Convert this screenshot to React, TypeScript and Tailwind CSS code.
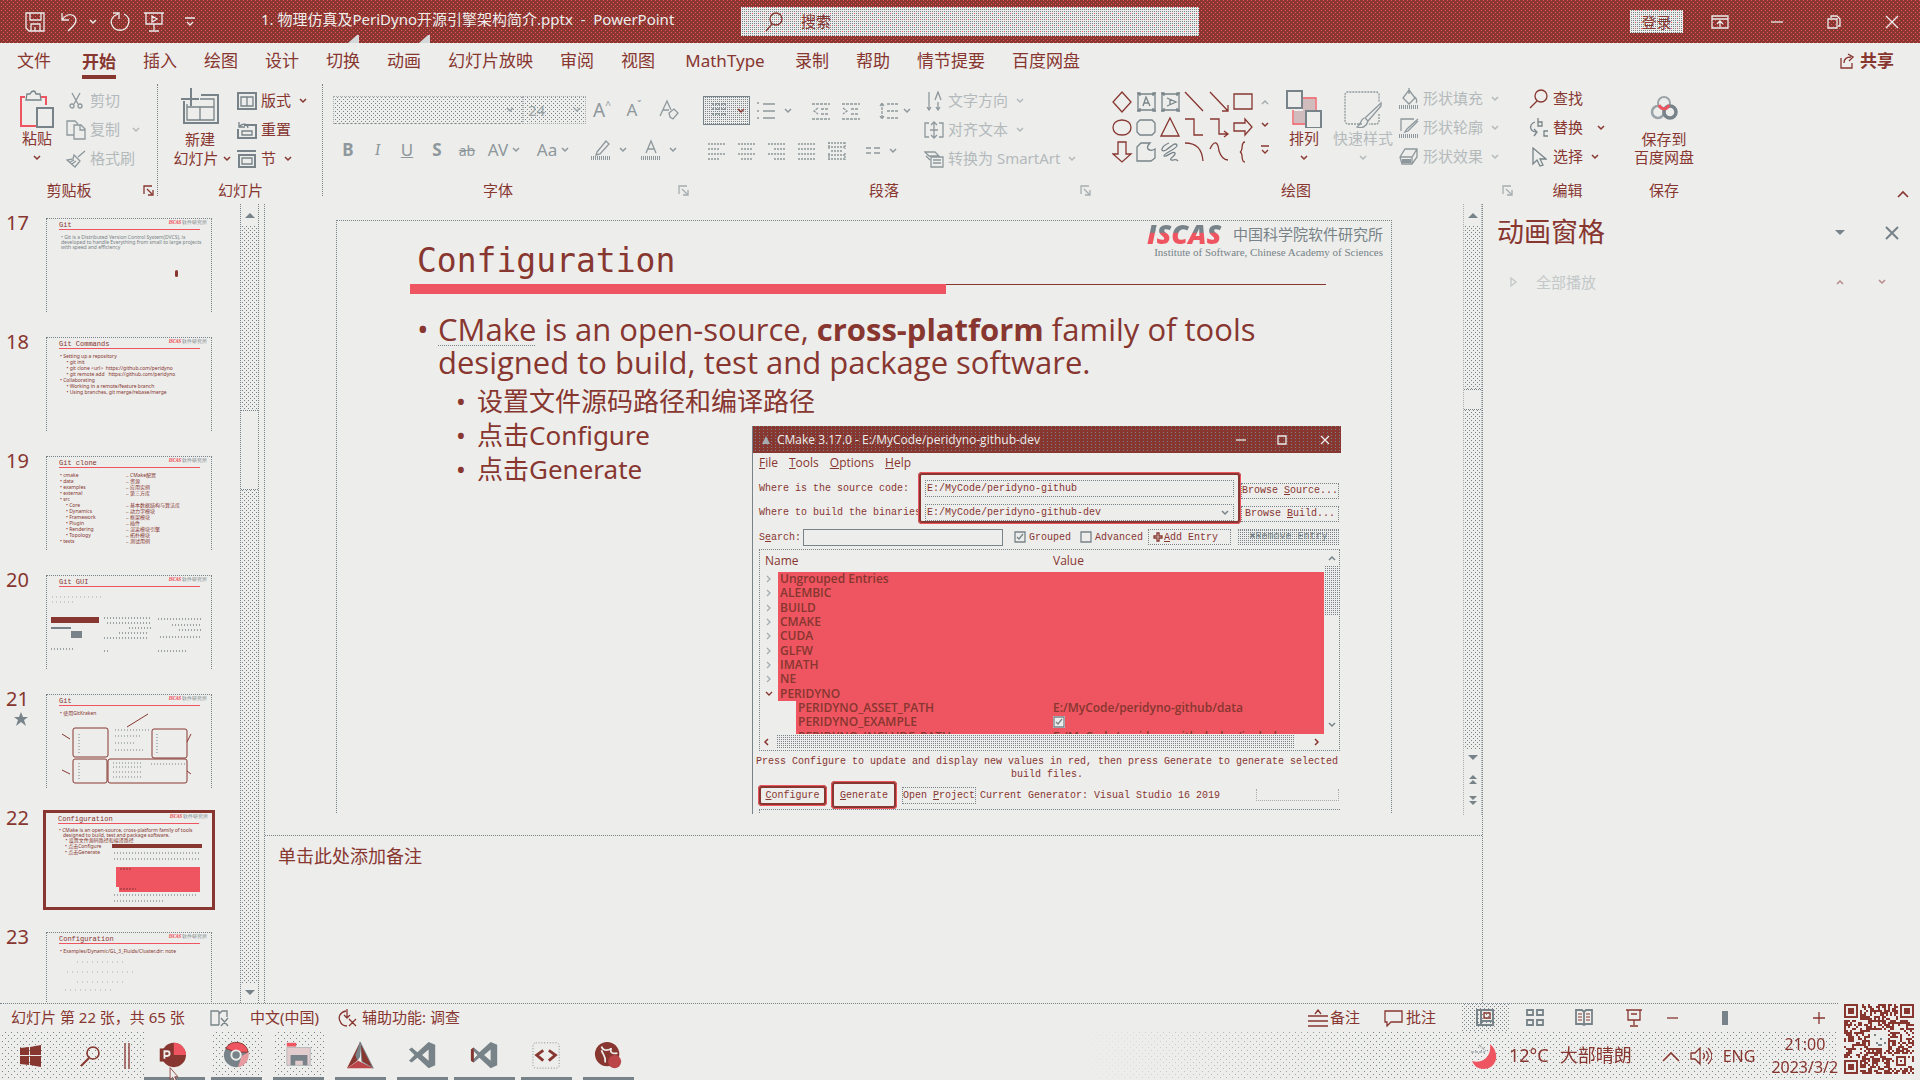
import React from "react";

type Kids = { children?: React.ReactNode; className?: string };

const RED_DITHER =
  "bg-[#873630] bg-[conic-gradient(at_3px_1px,#ee5560_25%,#0000_0),conic-gradient(at_3px_1px,#ee5560_25%,#0000_0)] bg-[length:4px_4px] bg-[position:0_0,2px_2px]";
const GRAY_DITHER =
  "bg-[conic-gradient(at_3px_1px,#778388_25%,#0000_0),conic-gradient(at_3px_1px,#778388_25%,#0000_0)] bg-[length:4px_4px] bg-[position:0_0,2px_2px]";
const DENSE_DITHER =
  "bg-[#ededeb] bg-[conic-gradient(at_1px_1px,#778388_25%,#0000_0)] bg-[length:2px_2px]";
const ROSE_DITHER =
  "bg-[#ededeb] bg-[conic-gradient(at_5px_1px,#ee5560_25%,#0000_0),conic-gradient(at_1px_1px,#778388_25%,#0000_0)] bg-[length:6px_6px,2px_2px]";
const SPARSE_DITHER =
  "bg-[conic-gradient(at_5px_1px,#778388_25%,#0000_0),conic-gradient(at_5px_1px,#778388_25%,#0000_0)] bg-[length:6px_6px] bg-[position:0_0,3px_3px]";

function Ico({ w, h, children, className = "" }: Kids & { w: number; h: number }) {
  return (
    <svg width={w} height={h} viewBox={`0 0 ${w} ${h}`} fill="none" stroke="currentColor" strokeWidth="1.3" className={`shrink-0 ${className}`} aria-hidden="true">
      {children}
    </svg>
  );
}

function Chev({ className = "" }: { className?: string }) {
  return (
    <Ico w={8} h={6} className={className}>
      <path d="M1 1l3 3 3-3" strokeWidth="1.5" />
    </Ico>
  );
}

function Launcher({ dim = false }: { dim?: boolean }) {
  return (
    <button aria-label="更多选项" className={`flex w-5 items-center justify-center ${dim ? "text-[#a5adb0]" : "text-[#873630]"}`}>
      <Ico w={11} h={11}>
        <path d="M1 9V1h8M4 4l5 5M10 5v5H5" />
      </Ico>
    </button>
  );
}

function Group({ label, launcher, className = "", children }: Kids & { label: string; launcher?: "on" | "dim" }) {
  return (
    <section aria-label={label} className={`flex shrink-0 flex-col ${className}`}>
      <div className="flex h-24">{children}</div>
      <div className="flex h-5 leading-5">
        <span className="flex-1 text-center">{label}</span>
        {launcher && <Launcher dim={launcher === "dim"} />}
      </div>
    </section>
  );
}

function Row({ icon, text, chev, dim, className = "" }: { icon: React.ReactNode; text: string; chev?: boolean; dim?: boolean; className?: string }) {
  return (
    <button disabled={dim} className={`flex h-[29px] items-center gap-1 whitespace-nowrap ${dim ? "text-[#b4babc]" : ""} ${className}`}>
      <span className={`flex w-5 justify-center ${dim ? "text-[#8e989c]" : "text-[#778388]"}`}>{icon}</span>
      <span>{text}</span>
      {chev && <Chev className="ml-1" />}
    </button>
  );
}

function Tool({ label, className = "", children }: Kids & { label: string }) {
  return (
    <button aria-label={label} className={`flex h-7 items-center justify-center text-[#8e989c] ${className}`}>
      {children}
    </button>
  );
}

function Lines({ xs }: { xs: [number, number][] }) {
  return (
    <Ico w={20} h={18}>
      {xs.map(([a, b], i) => (
        <path key={i} d={`M${a} ${2 + i * 5}H${b}`} strokeDasharray="2 1" />
      ))}
    </Ico>
  );
}

const tabs = ["插入", "绘图", "设计", "切换", "动画", "幻灯片放映", "审阅", "视图", "MathType", "录制", "帮助", "情节提要", "百度网盘"];

function TitleBar() {
  return (
    <header className={`relative flex h-[43px] shrink-0 items-center text-[#ededeb] ${RED_DITHER}`}>
      <div className="flex w-[261px] items-center pl-[24px]">
        <button aria-label="保存">
          <Ico w={22} h={22}>
            <path d="M2 2h18v18H5l-3-3zM6 2v7h11V2M7 20v-7h9v7M11 16v4" />
          </Ico>
        </button>
        <button aria-label="撤消" className="ml-[13px] flex items-center gap-2">
          <Ico w={22} h={22}>
            <path d="M3 2v7h7M3 9c3-5 8-7 12-4 4 4 2 8-6 15" />
          </Ico>
          <Chev />
        </button>
        <button aria-label="恢复" className="ml-3">
          <Ico w={22} h={22}>
            <path d="M4 2h6v6M9 3C3 5 1 10 3 14c3 7 13 7 16 0 2-5 0-9-4-11" />
          </Ico>
        </button>
        <button aria-label="从头开始放映" className="ml-3">
          <Ico w={22} h={22}>
            <path d="M1 2h20M3 2v11h16V2M11 13v6M6 20h10M9 5l5 3-5 3z" />
          </Ico>
        </button>
        <button aria-label="自定义快速访问工具栏" className="ml-5">
          <Ico w={10} h={10}>
            <path d="M0 1h10M2 5l3 3 3-3" />
          </Ico>
        </button>
      </div>
      <h1 className="w-[480px] pb-[5px] text-[15px] whitespace-pre">1. 物理仿真及PeriDyno开源引擎架构简介.pptx&nbsp; -&nbsp; PowerPoint</h1>
      <label className={`flex h-[29px] w-[458px] items-center gap-[18px] pl-6 text-[#873630] ${ROSE_DITHER}`}>
        <Ico w={18} h={20}>
          <circle cx="11" cy="7" r="6" />
          <path d="M7 12l-6 7" />
        </Ico>
        <input aria-label="搜索" placeholder="搜索" className="min-w-0 flex-1 bg-transparent text-[15px] outline-none placeholder:text-[#873630]" />
      </label>
      <div className="ml-auto flex items-center pr-[21px]">
        <button className={`h-[23px] w-[53px] text-[15px] leading-[22px] text-[#873630] ${ROSE_DITHER}`}>登录</button>
        <button aria-label="功能区显示选项" className="ml-[28px]">
          <Ico w={18} h={14}>
            <path d="M1 1h16v12H1zM1 4h16M9 12V6M6 9l3-3 3 3" />
          </Ico>
        </button>
        <button aria-label="最小化" className="ml-[41px]">
          <Ico w={14} h={14}>
            <path d="M1 7h12" />
          </Ico>
        </button>
        <button aria-label="还原" className="ml-[43px]">
          <Ico w={14} h={14}>
            <path d="M1 4h9v9H1zM4 3V1h6l3 3v7h-2" />
          </Ico>
        </button>
        <button aria-label="关闭" className="ml-[44px]">
          <Ico w={14} h={14}>
            <path d="M1 1l12 12M13 1L1 13" />
          </Ico>
        </button>
      </div>
      <Ico w={11} h={8} className="absolute bottom-0 left-[348px]">
        <path d="M0 8l9-8h2v8z" fill="#d5d8d8" stroke="none" />
      </Ico>
      <Ico w={11} h={8} className="absolute bottom-0 left-[419px]">
        <path d="M0 8l9-8h2v8z" fill="#d5d8d8" stroke="none" />
      </Ico>
    </header>
  );
}

function Tabs() {
  return (
    <nav className="flex h-[41px] shrink-0 items-start pt-[6px] text-[17px] leading-6">
      <button className="ml-[17px] h-6">文件</button>
      <button className="ml-[31px] h-[30px] border-b-4 border-[#873630] font-bold">开始</button>
      <div className="ml-[27px] flex gap-[27px]">
        {tabs.map((t) => (
          <button key={t} className={`h-6 whitespace-nowrap ${t === "MathType" ? "w-[86px]" : ""}`}>
            {t}
          </button>
        ))}
      </div>
      <button className="mr-[26px] ml-auto flex items-center gap-[6px] font-bold">
        <Ico w={14} h={16}>
          <path d="M1 5v10h11v-5M4 10c0-4 3-6 7-6M8 1l5 3-4 4" />
        </Ico>
        共享
      </button>
    </nav>
  );
}

const shapes = [
  "M10 1l9 10-9 10-9-10z",
  "M2 3h17v16H2zM7 15l3-9 4 9M8 12h5M1 2h3v3M20 2h-3v3M1 20h3v-3M20 20h-3v-3",
  "M2 3h17v16H2zM7 7l9 4-9 4M10 8v5M1 2h3v3M20 2h-3v3M1 20h3v-3M20 20h-3v-3",
  "M1 1l18 19",
  "M1 1l18 19M19 14v6h-6",
  "M1 3h18v15H1z",
  "M10 4c12 0 12 15 0 15S-2 4 10 4z",
  "M4 4h12l3 3v9l-3 3H4l-3-3V7z",
  "M10 2l9 18H1z",
  "M1 3h9v16h9",
  "M1 3h9v15h8M15 15l4 3-4 3",
  "M1 7h11V3l7 8-7 8v-4H1z",
  "M6 1h8v12h5l-9 8-9-8h5z",
  "M1 6l4-4h9c-6 6 0 9 5 6v9l-4 3H1z",
  "M9 2C0 6 0 12 6 9c6-4 9-8 11-5 1 4-14 8-13 11 2 2 9-6 11-3 1 3-6 5-4 7 3 1 4-2 7 1",
  "M1 2c12 0 17 6 18 18",
  "M1 8c4-9 8-8 9 2 2 6 5 9 9 9",
  "M12 1c-5 0-1 9-5 10 4 1 0 10 5 10",
];
const grayShapes = [1, 2, 7, 13, 14];

const cloudCircles = (
  <Ico w={28} h={24}>
    <circle cx="8" cy="16" r="6" strokeWidth="2.5" stroke="#9aa3a7" />
    <circle cx="14" cy="7" r="6" strokeWidth="2" stroke="#9aa3a7" />
    <circle cx="20" cy="16" r="6" strokeWidth="3.5" stroke="#778388" />
    <path d="M9 9c2 5 8 5 10 0" strokeWidth="3" stroke="#ee5560" />
  </Ico>
);

function Ribbon() {
  return (
    <div className="flex h-[120px] shrink-0 text-[15px]">
      <Group label="剪贴板" launcher="on" className="w-[158px]">
        <button className="flex w-[56px] flex-col items-center pt-[6px] pl-[18px] leading-5">
          <Ico w={36} h={38} className="text-[#778388]">
            <path d="M6 7H2v29h15M22 7h5v8" stroke="#ee5560" strokeWidth="2" />
            <path d="M8 4h3c2-4 5-4 6 0h4l1 6H7z" />
            <rect x="18" y="18" width="16" height="19" strokeWidth="2" />
          </Ico>
          <span>粘贴</span>
          <Chev className="mt-[7px]" />
        </button>
        <div className="pt-[2px] pl-[10px]">
          <Row dim text="剪切" icon={<Ico w={14} h={18}><path d="M3 1l6 11M11 1L5 12" /><circle cx="3" cy="14" r="2" /><circle cx="11" cy="14" r="2" /></Ico>} />
          <div className="flex items-center">
            <Row dim text="复制" icon={<Ico w={20} h={20}><path d="M8 15H1V1h8l3 3M8 5h7l4 4v10H8zM14 5v5h5" /></Ico>} />
            <Chev className="ml-3 text-[#b4babc]" />
          </div>
          <Row dim text="格式刷" icon={<Ico w={20} h={18}><path d="M19 1l-7 6M8 5l6 6-5 6-8-7 6-1zM4 12l4-2M6 14l4-3" /></Ico>} />
        </div>
      </Group>
      <div className="-ml-px h-[112px] w-px self-start border-l border-dotted border-[#778388]" />
      <Group label="幻灯片" className="w-[165px]">
        <button className="flex w-[76px] flex-col items-center pt-[3px] pl-2 leading-[19px]">
          <Ico w={40} h={38} className="text-[#778388]">
            <path d="M4 14v22h34V8H21M1 12h18M11 1v18" strokeWidth="2" />
            <path d="M7 17v16h27V12H20M7 20h27M20 20v13" />
          </Ico>
          <span className="mt-[5px]">新建</span>
          <span className="flex items-center gap-1 pl-1 whitespace-nowrap">
            幻灯片 <Chev />
          </span>
        </button>
        <div className="pt-[2px] pl-[3px]">
          <Row text="版式" chev icon={<Ico w={20} h={18}><path d="M1 1h18v16H1z" strokeWidth="2" /><path d="M4 5h12v9H4zM10 5v9" /></Ico>} />
          <Row text="重置" icon={<Ico w={20} h={18}><path d="M7 4h12v13H1V8" strokeWidth="2" /><path d="M2 1v5h6M2 6c3-4 8-4 9 1M5 10h10v4H5z" /></Ico>} />
          <Row text="节" chev icon={<Ico w={20} h={20}><path d="M0 2h19M2 6h16v12H2z" strokeWidth="2" /><path d="M5 9h10v6H5z" /></Ico>} />
        </div>
      </Group>
      <div className="-ml-px h-[112px] w-px self-start border-l border-dotted border-[#778388]" />
      <Group label="字体" launcher="dim" className="w-[370px]">
        <div className="flex flex-col gap-3 pt-[12px] pl-[10px]">
          <div className="flex items-center">
            <button aria-label="字体" className={`flex h-[28px] w-[190px] items-center justify-end border border-dotted border-[#a5adb0] pr-2 text-[#9aa3a7] ${GRAY_DITHER}`}>
              <Chev />
            </button>
            <button aria-label="字号" className={`flex h-[28px] w-[63px] items-center justify-between border border-dotted border-[#a5adb0] px-1 text-[#9aa3a7] ${GRAY_DITHER}`}>
              24 <Chev />
            </button>
            <Tool label="增大字号" className="ml-[6px] w-[20px] text-[19px]">
              A<sup className="text-[10px]">^</sup>
            </Tool>
            <Tool label="减小字号" className="ml-[12px] w-[20px] text-[17px]">
              A<sup className="text-[10px]">ˇ</sup>
            </Tool>
            <Tool label="清除格式" className="ml-[15px]">
              <Ico w={20} h={22}>
                <path d="M1 17L8 2l4 9M4 11h6M10 14l5-4 4 4-5 6-3-2z" />
              </Ico>
            </Tool>
          </div>
          <div className="flex items-center text-[17px]">
            <Tool label="加粗" className="w-[30px] font-bold">B</Tool>
            <Tool label="倾斜" className="w-[29px] font-serif italic">I</Tool>
            <Tool label="下划线" className="w-[30px] underline">U</Tool>
            <Tool label="阴影" className="w-[30px] font-bold">S</Tool>
            <Tool label="删除线" className="w-[30px] text-[14px] line-through">ab</Tool>
            <Tool label="字符间距" className="w-[44px] gap-1">AV <Chev /></Tool>
            <Tool label="更改大小写" className="ml-[5px] w-[44px] gap-1">Aa <Chev /></Tool>
            <Tool label="突出显示" className="ml-[12px] w-[44px] gap-2">
              <Ico w={20} h={22}>
                <path d="M6 13L15 2l3 3-9 10-4 1z" />
                <path d="M0 19h20" strokeWidth="4" strokeDasharray="1 1" />
              </Ico>
              <Chev />
            </Tool>
            <Tool label="字体颜色" className="ml-[6px] w-[44px] gap-2">
              <Ico w={20} h={22}>
                <path d="M5 14l5-12 5 12M7 10h6" />
                <path d="M0 19h20" strokeWidth="4" strokeDasharray="1 1" />
              </Ico>
              <Chev />
            </Tool>
          </div>
        </div>
      </Group>
      <Group label="段落" launcher="dim" className="w-[402px]">
        <div className="flex w-[228px] flex-col gap-3 pt-[12px] pl-[10px]">
          <div className="flex items-center">
            <button aria-label="项目符号" className={`flex h-[29px] w-[47px] items-center justify-center gap-2 border border-[#778388] text-[#778388] ${DENSE_DITHER}`}>
              <Lines xs={[[3, 17], [3, 17], [3, 17]]} />
              <Chev className="text-[#873630]" />
            </button>
            <Tool label="编号" className="ml-[6px] gap-2">
              <Ico w={20} h={20}><path d="M7 3h12M7 10h12M7 17h12M1 2h2M1 10h2M1 17h2" /></Ico>
              <Chev />
            </Tool>
            <Tool label="减少缩进" className="ml-[20px]"><Ico w={18} h={18}><path d="M0 2h18M9 7h8M9 12h8M0 17h18M6 6L2 9l4 3" strokeDasharray="3 1" /></Ico></Tool>
            <Tool label="增加缩进" className="ml-[12px]"><Ico w={18} h={18}><path d="M0 2h18M9 7h8M9 12h8M0 17h18M1 6l4 3-4 3" strokeDasharray="3 1" /></Ico></Tool>
            <Tool label="行距" className="ml-[19px] gap-1"><Ico w={20} h={20}><path d="M8 3h12M8 10h12M8 17h12M3 2v16M1 5l2-3 2 3M1 15l2 3 2-3" strokeDasharray="3 1" /></Ico><Chev /></Tool>
          </div>
          <div className="flex items-center gap-[10px] pl-1">
            <Tool label="左对齐"><Lines xs={[[1, 19], [1, 13], [1, 19], [1, 13]]} /></Tool>
            <Tool label="居中"><Lines xs={[[1, 19], [4, 16], [1, 19], [4, 16]]} /></Tool>
            <Tool label="右对齐"><Lines xs={[[1, 19], [7, 19], [1, 19], [7, 19]]} /></Tool>
            <Tool label="两端对齐"><Lines xs={[[1, 19], [1, 19], [1, 19], [1, 19]]} /></Tool>
            <Tool label="分散对齐"><Ico w={20} h={20}><path d="M1 2h18M1 6h18M1 14h18M1 18h18M2 1v7M18 1v7M2 12v7M18 12v7M4 10h12" strokeDasharray="2 1" /></Ico></Tool>
            <Tool label="分栏" className="ml-2 gap-2"><Ico w={16} h={12}><path d="M1 3h5M1 8h5M9 3h6M9 8h6" /></Ico><Chev /></Tool>
          </div>
        </div>
        <div className="pt-[2px] pl-[3px]">
          <Row dim chev text="文字方向" icon={<Ico w={16} h={20}><path d="M3 1v17M1 16l2 3 2-3M9 9l3-8 3 8M12 11v8M10 16l2 3 2-3" /></Ico>} />
          <Row dim chev text="对齐文本" icon={<Ico w={20} h={18}><path d="M5 2H1v14h4M15 2h4v14h-4M10 1v16M7 4l3-3 3 3M7 14l3 3 3-3M6 9h8" /></Ico>} />
          <Row dim chev text="转换为 SmartArt" icon={<Ico w={20} h={18}><path d="M1 2h10l4 4H5zM7 7h12v10H7zM9 10h8M9 13h8M2 6l4 4" /></Ico>} />
        </div>
      </Group>
      <Group label="绘图" launcher="dim" className="w-[422px]">
        <div className="flex pt-[6px] pl-[17px]">
          <div className="grid h-[74px] w-[145px] grid-cols-6">
            {shapes.map((d, i) => (
              <button key={i} aria-label={`形状 ${i + 1}`} className={grayShapes.includes(i) ? "text-[#778388]" : "text-[#873630]"}>
                <Ico w={21} h={22}>
                  <path d={d} />
                </Ico>
              </button>
            ))}
          </div>
          <div className="flex h-[74px] w-4 flex-col items-center justify-around">
            <Chev className="rotate-180 text-[#a5adb0]" />
            <Chev />
            <Ico w={8} h={10}><path d="M0 1h8M1 5l3 3 3-3" /></Ico>
          </div>
        </div>
        <button className="flex w-[60px] flex-col items-center pt-[6px] pl-[2px] leading-5">
          <Ico w={38} h={38} className="text-[#778388]">
            <path d="M18 8h13v12M8 20v14h12" stroke="#ee5560" />
            <path d="M18 9h12v11h-9v13H9V21h9z" fill="#d0bcbd" stroke="none" />
            <rect x="2" y="1" width="15" height="17" strokeWidth="2" />
            <rect x="21" y="21" width="15" height="17" strokeWidth="2" />
          </Ico>
          <span>排列</span>
          <Chev className="mt-[7px]" />
        </button>
        <button disabled className="flex w-[60px] flex-col items-center pt-[6px] leading-5 text-[#b4babc]">
          <Ico w={40} h={38} className="text-[#8e989c]">
            <path d="M19 34H4l-2-2V4l2-2h30l2 2v8M36 24v8l-2 2h-8" strokeDasharray="2 1" />
            <path d="M38 13L22 28l3 3 13-15zM21 28c-4 2-3 7-7 9 5 2 10-1 11-6" />
          </Ico>
          <span className="whitespace-nowrap">快速样式</span>
          <Chev className="mt-[7px]" />
        </button>
        <div className="pl-[6px]">
          <Row dim chev text="形状填充" icon={<Ico w={20} h={22}><path d="M10 2l6 8-6 6-6-6zM10 0v6M16 9c2 2 2 5 1 6" /><path d="M0 19h20" strokeWidth="4" strokeDasharray="1 1" /></Ico>} />
          <Row dim chev text="形状轮廓" icon={<Ico w={20} h={22}><path d="M2 14V2h13M19 2L8 12l-2 3 3-1L19 4" /><path d="M0 19h20" strokeWidth="4" strokeDasharray="1 1" /></Ico>} />
          <Row dim chev text="形状效果" icon={<Ico w={20} h={18}><path d="M1 9l5-8h12v8l-5 7H3zM1 9h12l5-8M13 9v7" /><path d="M3 13h9" strokeWidth="4" /></Ico>} />
        </div>
      </Group>
      <Group label="编辑" className="w-[101px]">
        <div className="pl-[12px]">
          <Row text="查找" icon={<Ico w={20} h={20} className="text-[#873630]"><circle cx="12" cy="7" r="6" /><path d="M8 12l-7 7" /></Ico>} />
          <div className="flex items-center">
            <Row text="替换" icon={<Ico w={20} h={22}><path d="M9 1v8h4V5H9M19 14h-4v5h4M6 5C-1 8 1 15 8 15M5 12l3 3-3 4" /></Ico>} />
            <Chev className="ml-[14px]" />
          </div>
          <Row text="选择" chev icon={<Ico w={16} h={20}><path d="M2 1v16l4-4 3 6 3-1-3-6h6z" /></Ico>} />
        </div>
      </Group>
      <Group label="保存" className="w-[92px]">
        <button className="flex flex-1 flex-col items-center pt-[12px] leading-[18px]">
          {cloudCircles}
          <span className="mt-[10px]">保存到</span>
          <span>百度网盘</span>
        </button>
      </Group>
      <button aria-label="折叠功能区" className="mr-[11px] mb-[6px] ml-auto self-end">
        <Ico w={12} h={8}><path d="M1 7l5-5 5 5" strokeWidth="1.6" /></Ico>
      </button>
    </div>
  );
}

function MiniList({ items, className = "" }: { items: string[]; className?: string }) {
  return (
    <ul className={`text-[5px] whitespace-pre ${className}`}>
      {items.map((t, i) => (
        <li key={i}>{t}</li>
      ))}
    </ul>
  );
}

function Thumb({ n, title, selected, star, children }: Kids & { n: number; title: string; selected?: boolean; star?: boolean }) {
  return (
    <li className="flex h-[119px]">
      <div className="-mt-[3px] w-[43px] pl-[6px] text-[20px] leading-[22px]">
        <span className="block">{n}</span>
        {star && (
          <Ico w={14} h={14} className="mt-[2px] ml-[8px]">
            <path d="M7 0l2 5h5l-4 3 2 6-5-4-5 4 2-6-4-3h5z" fill="#778388" stroke="none" />
          </Ico>
        )}
      </div>
      <button aria-label={`幻灯片 ${n}`} className={`block h-[100px] w-[172px] overflow-hidden border-[3px] text-left ${selected ? "border-[#873630]" : "border-transparent"}`}>
        <span className={`block h-[94px] ${selected ? "" : "border border-b-0 border-dotted border-[#778388]"}`}>
          <span className="flex h-[10px] justify-between pl-[12px] font-mono text-[7px] leading-[12px]">
            {title}
            <span className="flex gap-px pr-1 font-serif text-[5px] leading-[7px] text-[#778388]">
              <b className="text-[#ee5560] italic">ISCAS</b>软件研究所
            </span>
          </span>
          <span className="ml-[12px] block h-px w-[141px] bg-[#ee5560]" />
          {children}
        </span>
      </button>
    </li>
  );
}

const scopeRows: [string, string, number][] = [
  ["• cmake", "CMake配置", 0],
  ["• data", "资源", 0],
  ["• examples", "应用实例", 0],
  ["• external", "第三方库", 0],
  ["• src", "", 0],
  ["• Core", "基本数据结构与算法库", 6],
  ["• Dynamics", "动力学模块", 6],
  ["• Framework", "框架模块", 6],
  ["• Plugin", "插件", 6],
  ["• Rendering", "渲染模块引擎", 6],
  ["• Topology", "拓扑模块", 6],
  ["• tests", "测试用例", 0],
];

function ThumbPane() {
  return (
    <aside className="flex w-[265px] shrink-0 overflow-hidden border-r border-dotted border-[#778388]">
      <ol className="w-[240px] pt-[11px]">
        <Thumb n={17} title="Git">
          <MiniList className="pt-[5px] pl-[14px] leading-[5px] text-[#778388]" items={["• Git is a Distributed Version Control System(DVCS), is", "developed to handle Everything from small to large projects", "with speed and efficiency"]} />
          <span className="mt-[20px] ml-[128px] block h-[7px] w-[3px] rounded bg-[#873630]" />
        </Thumb>
        <Thumb n={18} title="Git Commands">
          <MiniList className="pt-[4px] pl-[13px] leading-[6px]" items={["• Setting up a repository", "     • git init", "     • git clone <url>  https://github.com/peridyno", "     • git remote add   https://github.com/peridyno", "• Collaborating", "     • Working in a remote/feature branch", "     • Using branches, git merge/rebase/merge"]} />
        </Thumb>
        <Thumb n={19} title="Git clone">
          <span className="grid grid-cols-[62px_1fr] gap-x-1 pt-[4px] pl-[13px] text-[5px] leading-[6px] whitespace-nowrap">
            {scopeRows.map(([a, b, pad]) => (
              <React.Fragment key={a}>
                <span style={{ paddingLeft: pad }}>{a}</span>
                <span>{b && `.. ${b}`}</span>
              </React.Fragment>
            ))}
          </span>
        </Thumb>
        <Thumb n={20} title="Git GUI">
          <svg width="164" height="72" viewBox="0 0 164 72" className="block" aria-hidden="true">
            <path d="M5 10h50M5 15h24" stroke="#a5adb0" strokeDasharray="1 3" />
            <rect x="4" y="30" width="48" height="6" fill="#873630" />
            <path d="M4 41h20" stroke="#778388" strokeWidth="2" />
            <rect x="24" y="44" width="11" height="7" fill="#778388" />
            <path d="M57 31h48M60 36h45M82 41h22M72 46h30M57 51h44M57 64h6M111 32h44M125 38h29M132 43h22M113 50h42M4 62h22M111 64h28" stroke="#778388" strokeWidth="2" strokeDasharray="1 2" opacity=".7" />
          </svg>
        </Thumb>
        <Thumb n={21} title="Git" star>
          <span className="block pt-[4px] pl-[13px] text-[5px] leading-[6px]">• 使用GitKraken</span>
          <svg width="164" height="76" viewBox="0 0 164 76" className="-mt-1 block" fill="none" stroke="#873630" aria-hidden="true">
            <rect x="26" y="16" width="35" height="29" rx="2" />
            <rect x="105" y="17" width="35" height="29" rx="2" />
            <rect x="26" y="47" width="34" height="24" rx="2" />
            <rect x="61" y="47" width="79" height="24" rx="2" />
            <path d="M101 2L80 15M15 22l8 5M144 22l-4 8M15 58l8 4M140 59l4 3" />
            <path d="M68 18h34M68 24h25M68 31h20M68 38h28M32 22v20M110 22v20M32 51v16M66 51h30M66 55h30M66 60h30M66 65h30M104 52h34" stroke="#778388" strokeDasharray="1 2" />
          </svg>
        </Thumb>
        <Thumb n={22} title="Configuration" selected>
          <MiniList className="pt-[4px] pl-[13px] leading-[5px]" items={["• CMake is an open-source, cross-platform family of tools", "   designed to build, test and package software.", "     • 设置文件源码路径和编译路径"]} />
          <span className="flex text-[5px] leading-[6px]">
            <span className="w-[66px] pl-[19px]">• 点击Configure<br />• 点击Generate</span>
            <svg width="92" height="60" viewBox="0 0 92 60" aria-hidden="true">
              <path d="M0 3h90" stroke="#873630" strokeWidth="4" />
              <path d="M2 10h86M2 16h86M2 52h84M2 58h50" stroke="#a5adb0" strokeWidth="2" strokeDasharray="1 2" />
              <path d="M4 24h84v25H7v-5H4z" fill="#ee5560" />
              <path d="M8 26h12M8 46h16" stroke="#873630" strokeDasharray="2 1" />
            </svg>
          </span>
        </Thumb>
        <Thumb n={23} title="Configuration">
          <MiniList className="pt-[4px] pl-[13px] leading-[6px]" items={["• Examples/Dynamic/GL_3_Fluids/Cluster.dir: note"]} />
          <svg width="150" height="50" viewBox="0 0 150 50" className="block" aria-hidden="true">
            <path d="M30 8h50M20 18h70M30 28h50M18 36h50" stroke="#a5adb0" strokeDasharray="1 4" />
          </svg>
        </Thumb>
      </ol>
      <div className={`flex h-full w-[19px] flex-col border-x border-dotted border-[#778388] ${GRAY_DITHER}`}>
        <button aria-label="向上滚动" className="flex h-[21px] items-center justify-center bg-[#ededeb]"><Tri up /></button>
        <div className="mt-[185px] h-[80px] border-y border-dotted border-[#778388] bg-[#ededeb]" />
        <button aria-label="向下滚动" className="mt-auto flex h-[20px] items-center justify-center bg-[#ededeb]"><Tri /></button>
      </div>
    </aside>
  );
}

function Tri({ up = false }: { up?: boolean }) {
  return (
    <Ico w={10} h={6}>
      <path d={up ? "M0 6l5-5 5 5z" : "M0 0l5 5 5-5z"} fill="#778388" stroke="none" />
    </Ico>
  );
}

const tree: { name: string; child?: boolean; value?: string; check?: boolean; open?: boolean }[] = [
  { name: "Ungrouped Entries" },
  { name: "ALEMBIC" },
  { name: "BUILD" },
  { name: "CMAKE" },
  { name: "CUDA" },
  { name: "GLFW" },
  { name: "IMATH" },
  { name: "NE" },
  { name: "PERIDYNO", open: true },
  { name: "PERIDYNO_ASSET_PATH", child: true, value: "E:/MyCode/peridyno-github/data" },
  { name: "PERIDYNO_EXAMPLE", child: true, check: true },
  { name: "PERIDYNO_INCLUDE_PATH", child: true, value: "E:/MyCode/peridyno-github-dev/include" },
];

function Menu({ t }: { t: string }) {
  return (
    <button>
      <u>{t[0]}</u>
      {t.slice(1)}
    </button>
  );
}

const DOT_BTN = "border border-dotted border-[#778388]";

function CMakeWindow() {
  return (
    <div className="mt-[42px] h-[388px] w-[589px] shrink-0 overflow-hidden border-l border-[#778388] font-['Open_Sans','Noto_Sans',sans-serif] text-[12px]">
      <div className="-ml-px flex h-[27px] items-center bg-[#873630] bg-[conic-gradient(at_3px_1px,#778388_25%,#0000_0)] bg-[length:4px_3px] pr-[11px] pl-[9px] text-[#ededeb]">
        <Ico w={10} h={10}><path d="M5 1l4 8H1z" fill="#a5adb0" stroke="none" /></Ico>
        <span className="ml-[6px] flex-1">CMake 3.17.0 - E:/MyCode/peridyno-github-dev</span>
        <button aria-label="最小化 CMake"><Ico w={10} h={10}><path d="M0 5h10" /></Ico></button>
        <button aria-label="最大化 CMake" className="ml-[31px]"><Ico w={10} h={10}><path d="M1 1h8v8H1z" /></Ico></button>
        <button aria-label="关闭 CMake" className="ml-[33px]"><Ico w={10} h={10}><path d="M1 1l8 8M9 1L1 9" /></Ico></button>
      </div>
      <div className="flex h-[19px] items-center gap-[11px] pl-[6px]">
        {["File", "Tools", "Options", "Help"].map((t) => <Menu key={t} t={t} />)}
      </div>
      <div className="flex h-[52px] pl-[6px] font-['Liberation_Mono',monospace] text-[10px]">
        <div className="flex w-[159px] flex-col pt-[5px] whitespace-nowrap">
          <label htmlFor="src" className="h-6 leading-6">Where is the source code:</label>
          <label htmlFor="bin" className="h-6 leading-6">Where to build the binaries:</label>
        </div>
        <div className="flex w-[326px] flex-col justify-between rounded border-[3px] border-[#873630] bg-[#ededeb] px-1 pt-[5px] outline-1 -outline-offset-1 outline-[#ee5560]">
          <input id="src" defaultValue="E:/MyCode/peridyno-github" className={`h-[17px] w-full px-px outline-none ${DOT_BTN}`} />
          <div className={`flex h-[17px] items-center pr-1 ${DOT_BTN}`}>
            <input id="bin" defaultValue="E:/MyCode/peridyno-github-dev" className="min-w-0 flex-1 px-px outline-none" />
            <Chev className="text-[#778388]" />
          </div>
        </div>
        <div className="flex flex-1 flex-col items-stretch gap-[7px] pt-[11px] pr-[2px] whitespace-nowrap">
          <button className={`h-4 leading-[14px] ${DOT_BTN}`}>Browse <u>S</u>ource...</button>
          <button className={`h-4 leading-[14px] ${DOT_BTN}`}>Browse <u>B</u>uild...</button>
        </div>
      </div>
      <div className="flex h-[25px] items-center pt-px pr-[2px] pl-[6px] font-['Liberation_Mono',monospace] text-[10px]">
        <label htmlFor="find" className="w-[44px]">S<u>e</u>arch:</label>
        <input id="find" className="h-[17px] w-[200px] border border-[#778388]" />
        <label className="ml-[11px] flex items-center gap-[3px]">
          <input type="checkbox" defaultChecked className="sr-only" />
          <Ico w={12} h={12} className="text-[#778388]"><path d="M1 1h10v10H1zM3 6l2 2 4-5" /></Ico>
          Grouped
        </label>
        <label className="ml-[9px] flex items-center gap-[3px]">
          <input type="checkbox" className="sr-only" />
          <Ico w={12} h={12} className="text-[#778388]"><path d="M1 1h10v10H1z" /></Ico>
          Advanced
        </label>
        <button className={`ml-auto flex h-4 w-[83px] items-center gap-px px-1 whitespace-nowrap ${DOT_BTN}`}>
          <Ico w={10} h={10}><path d="M4 1h2v3h3v2H6v3H4V6H1V4h3z" /></Ico>
          <span><u>A</u>dd Entry</span>
        </button>
        <button disabled className={`ml-[7px] h-4 w-[101px] leading-[14px] text-[#778388] ${DOT_BTN} ${DENSE_DITHER}`}>✖Remove Entry</button>
      </div>
      <div className="mr-[1px] ml-[6px] h-[202px] border border-dotted border-[#778388]">
        <div className="flex h-[184px]">
          <div className="flex-1 overflow-hidden">
            <table className="w-full table-fixed border-separate border-spacing-0 text-left">
              <colgroup><col className="w-[18px]" /><col className="w-[275px]" /><col /></colgroup>
              <thead>
                <tr className="h-[22px] leading-[20px]">
                  <th colSpan={2} className="pl-[5px] font-normal">Name</th>
                  <th className="font-normal">Value</th>
                </tr>
              </thead>
              <tbody className="leading-[14px]">
                {tree.map((r) => (
                  <tr key={r.name} className="h-[14px] nth-[3n]:h-[15px]">
                    <td className="p-0">
                      {!r.child && <Ico w={8} h={8} className={`ml-[5px] block ${r.open ? "" : "text-[#a5adb0]"}`}><path d={r.open ? "M1 2l3 3 3-3" : "M2 1l3 3-3 3"} /></Ico>}
                    </td>
                    <td className={`bg-[#ee5560] p-0 pl-[2px] font-semibold ${r.child ? "border-l-[18px] border-[#ededeb]" : ""}`}>{r.name}</td>
                    <td className="bg-[#ee5560] p-0 font-semibold">
                      {r.check ? (
                        <span className="block w-3 bg-[#ededeb] text-[#778388]"><Ico w={12} h={12} className="block"><path d="M1 1h10v10H1zM3 6l2 2 4-5" /></Ico></span>
                      ) : (
                        r.value
                      )}
                    </td>
                  </tr>
                ))}
              </tbody>
            </table>
          </div>
          <div className="flex w-[15px] flex-col items-center pt-[5px]">
            <Chev className="rotate-180 text-[#778388]" />
            <div className={`mt-[5px] h-[49px] w-full ${DENSE_DITHER}`} />
            <Chev className="mt-auto mb-[6px] text-[#778388]" />
          </div>
        </div>
        <div className="flex h-4 items-center pl-[2px]">
          <Chev className="rotate-90" />
          <div className={`ml-[6px] h-[14px] w-[519px] ${DENSE_DITHER}`} />
          <Chev className="ml-[18px] -rotate-90" />
        </div>
      </div>
      <p className="pt-[4px] text-center font-['Liberation_Mono',monospace] text-[10px] leading-[13px]">
        Press Configure to update and display new values in red, then press Generate to generate selected build files.
      </p>
      <div className="flex h-[28px] items-center pl-[5px] font-['Liberation_Mono',monospace] text-[10px] whitespace-nowrap">
        <button className="h-[21px] w-[69px] rounded border-[3px] border-[#873630] leading-[15px] outline-1 -outline-offset-1 outline-[#ee5560]"><u>C</u>onfigure</button>
        <button className="ml-[4px] h-[28px] w-[66px] rounded border-[3px] border-[#873630] outline-1 -outline-offset-1 outline-[#ee5560]"><u>G</u>enerate</button>
        <button className={`ml-[5px] h-[17px] w-[74px] leading-[15px] ${DOT_BTN}`}>Open <u>P</u>roject</button>
        <span className="ml-[4px] flex-1">Current Generator: Visual Studio 16 2019</span>
        <span className="mr-[2px] h-3 w-[83px] border border-t-0 border-dotted border-[#a5adb0]" />
      </div>
      <div className="mr-[1px] ml-[6px] h-3 border-t border-l border-dotted border-[#778388]" />
    </div>
  );
}

function Slide() {
  return (
    <article className="h-[593px] w-[1056px] shrink-0 border-x border-t border-dotted border-[#778388]">
      <div className="flex h-[63px] justify-between pr-[8px] pl-[80px]">
        <h2 className="pt-[12px] font-['DejaVu_Sans_Mono',monospace] text-[33px] leading-[56px]">Configuration</h2>
        <div className="w-[239px] pt-[2px] text-[#778388]">
          <div className="flex h-[22px] items-center justify-between pl-[3px] leading-[22px]">
            <span className="bg-[linear-gradient(#778388_42%,#ee5560_48%)] bg-clip-text pr-1 font-['Open_Sans',sans-serif] text-[27px] font-extrabold text-transparent italic">ISCAS</span>
            <span className="font-['Noto_Sans_CJK_SC',serif] text-[15px]">中国科学院软件研究所</span>
          </div>
          <div className="text-right font-['Liberation_Serif',serif] text-[11px] leading-[14px]">Institute of Software, Chinese Academy of Sciences</div>
        </div>
      </div>
      <div className="ml-[73px] flex w-[916px]">
        <div className="h-[10px] w-[536px] bg-[#ee5560]" />
        <div className="h-px flex-1 bg-[#873630]" />
      </div>
      <div className="flex pt-[19px] pl-[80px] font-['Open_Sans','Noto_Sans',sans-serif] text-[31px] leading-[33px]">
        <span className="w-[21px] shrink-0">•</span>
        <p className="w-[850px]">
          <span className="underline decoration-[#778388] decoration-dotted decoration-1 underline-offset-4">CMake</span> is an open-source, <b>cross-platform</b> family of tools
          <br />
          designed to build, test and package software.
        </p>
      </div>
      <div className="mt-[5px] flex">
        <ul className="w-[415px] shrink-0 pl-[119px] text-[26px] leading-[34px] whitespace-nowrap">
          {["设置文件源码路径和编译路径", "点击Configure", "点击Generate"].map((t) => (
            <li key={t} className="flex">
              <span className="w-[21px] shrink-0">•</span>
              {t}
            </li>
          ))}
        </ul>
        <CMakeWindow />
      </div>
    </article>
  );
}

function Main() {
  return (
    <main className="flex min-h-0 flex-1">
      <ThumbPane />
      <div className="flex min-w-0 flex-1 flex-col border-r border-dotted border-[#778388]">
        <div className="flex min-h-0 flex-1 border-b border-dotted border-[#778388]">
          <div className="flex min-w-0 flex-1 justify-center overflow-hidden pt-[16px]">
            <Slide />
          </div>
          <div className={`mb-[20px] flex w-[19px] flex-col border-x border-dotted border-[#a5adb0] ${GRAY_DITHER}`}>
            <button aria-label="上滚" className="flex h-[21px] items-center justify-center bg-[#ededeb]"><Tri up /></button>
            <div className="mt-[164px] h-[21px] border-y border-dotted border-[#778388] bg-[#ededeb]" />
            <div className="mt-auto flex h-[66px] flex-col items-center justify-between bg-[#ededeb] pt-[6px] pb-[9px]">
              <Tri />
              <Ico w={10} h={10}><path d="M1 5l4-4 4 4zM1 10l4-4 4 4z" fill="#778388" stroke="none" /></Ico>
              <Ico w={10} h={10}><path d="M1 0l4 4 4-4zM1 5l4 4 4-4z" fill="#778388" stroke="none" /></Ico>
            </div>
          </div>
        </div>
        <div className="h-[167px] shrink-0 px-[13px] pt-[7px] text-[18px] leading-[26px]">单击此处添加备注</div>
      </div>
      <aside className="w-[437px] shrink-0 pl-[14px]">
        <div className="flex h-[57px] items-center pr-[21px]">
          <h2 className="flex-1 text-[27px]">动画窗格</h2>
          <button aria-label="窗格选项"><Tri /></button>
          <button aria-label="关闭窗格" className="ml-[40px] text-[#778388]"><Ico w={14} h={14}><path d="M1 1l12 12M13 1L1 13" strokeWidth="2" /></Ico></button>
        </div>
        <div className="flex h-[42px] items-center pl-[13px] text-[15px] text-[#c3c8c9]">
          <button disabled className="flex items-center gap-[18px]">
            <Ico w={8} h={10}><path d="M1 1l5 4-5 4z" /></Ico>
            全部播放
          </button>
          <button aria-label="上移" className="mr-[34px] ml-auto text-[#b98a8c]"><Chev className="rotate-180" /></button>
          <button aria-label="下移" className="mr-[34px] text-[#b98a8c]"><Chev /></button>
        </div>
      </aside>
    </main>
  );
}

function StatusBar() {
  return (
    <footer className="flex h-[29px] shrink-0 items-center border-t border-dotted border-[#778388] pb-px pl-[11px] text-[15px] whitespace-nowrap">
      <span className="w-[199px]">幻灯片 第 22 张，共 65 张</span>
      <button aria-label="拼写检查" className="w-[40px] text-[#778388]"><Ico w={20} h={18}><path d="M9 16H1V2h7l2 2 2-2h5v6M9 3v13M11 9l7 8M18 9l-7 8" /></Ico></button>
      <button className="w-[88px] text-left">中文(中国)</button>
      <button className="flex items-center gap-1"><Ico w={20} h={20}><path d="M8 3C2 4 0 9 2 13c1 3 4 5 7 5M9 1v9M6 7l3 3 3-3M11 11l7 7M18 11l-7 7" /></Ico>辅助功能: 调查</button>
      <div className="mr-[95px] ml-auto flex h-full items-center">
        <button className="flex items-center gap-px"><Ico w={21} h={18}><path d="M0 7h20M0 12h20M0 17h20M7 5l3-4 3 4" /></Ico>备注</button>
        <button className="ml-[24px] flex items-center gap-[2px]"><Ico w={20} h={18}><path d="M1 2h17v11H7l-4 4v-4H1z" /></Ico>批注</button>
        <button aria-label="普通视图" className={`ml-[25px] flex h-full w-[48px] items-center justify-center text-[#778388] ${GRAY_DITHER}`}><Ico w={18} h={17}><path d="M1 1h16v15H1zM5 1v15M5 12h12" strokeWidth="2" /><path d="M8 4h6v5H8z" stroke="#873630" /></Ico></button>
        <button aria-label="幻灯片浏览" className="ml-[17px] text-[#778388]"><Ico w={18} h={17}><path d="M1 1h6v5H1zM11 1h6v5h-6zM1 11h6v5H1zM11 11h6v5h-6z" strokeWidth="1.8" /></Ico></button>
        <button aria-label="阅读视图" className="ml-[31px] text-[#778388]"><Ico w={18} h={17}><path d="M1 1h6l2 2 2-2h6v14h-6l-2 1-2-1H1zM9 3v12" strokeWidth="1.8" /><path d="M3 5h4M3 8h4M3 11h4M11 5h4M11 8h4M11 11h4" stroke="#873630" strokeWidth="1" /></Ico></button>
        <button aria-label="幻灯片放映" className="ml-[32px]"><Ico w={18} h={18}><path d="M1 1h16M3 1v10h12V1M9 11v5M5 17h8M6 5h6" /></Ico></button>
        <button aria-label="缩小" className="ml-[24px]"><Ico w={12} h={12}><path d="M0 6h11" /></Ico></button>
        <input type="range" aria-label="缩放" min={0} max={100} defaultValue={33} className="ml-[6px] h-[15px] w-[118px] appearance-none bg-transparent [&::-webkit-slider-thumb]:h-[14px] [&::-webkit-slider-thumb]:w-[6px] [&::-webkit-slider-thumb]:appearance-none [&::-webkit-slider-thumb]:bg-[#778388]" />
        <button aria-label="放大" className="ml-[10px]"><Ico w={12} h={12}><path d="M0 6h12M6 0v12" /></Ico></button>
      </div>
    </footer>
  );
}

const apps: { name: string; size: string; icon: React.ReactNode }[] = [
  { name: "PowerPoint", size: "w-[61px] pr-2", icon: <><circle cx="19" cy="15" r="13" fill="#873630" /><path d="M19 2a13 13 0 0113 13H19z" fill="#ee5560" /><rect x="4" y="8" width="14" height="14" fill="#873630" /><path d="M9 19v-8h3a2 2 0 010 5H9" stroke="#ededeb" strokeWidth="2" /></> },
  { name: "Chrome", size: "w-[51px]", icon: <><circle cx="15" cy="15" r="13" fill="#778388" /><path d="M4 8a13 13 0 0124 4H15z" fill="#ee5560" stroke="#873630" /><path d="M28 12a13 13 0 01-11 16l4-12z" fill="#e79aa0" /><circle cx="15" cy="15" r="6" fill="#ededeb" /><circle cx="15" cy="15" r="4" fill="#778388" /></> },
  { name: "文件资源管理器", size: "ml-[5px] w-[51px]", icon: <><path d="M3 2h10v4H3z" fill="#ee5560" /><path d="M3 7h25v19H3z" fill="#e3cccd" stroke="#b4babc" /><path d="M7 26V15h18v11h-5v-5h-8v5z" fill="#778388" /></> },
  { name: "CMake", size: "ml-[5px] w-[51px]", icon: <><path d="M15 1L1 29l11-8z" fill="#873630" /><path d="M15 1l14 28-12-7z" fill="#873630" stroke="#778388" /><path d="M1 29l12-8 16 8z" fill="#ba464a" /><path d="M15 1v16l-3 4-2-6z" fill="#778388" /></> },
  { name: "VS Code", size: "ml-[5px] w-[51px]", icon: <path d="M22 1l7 3v22l-7 3L10 18l-6 5-3-2 6-6-6-6 3-2 6 5zM22 9l-7 6 7 6z" fill="#778388" fillRule="evenodd" /> },
  { name: "Visual Studio", size: "w-[61px]", icon: <><path d="M22 1l7 3v22l-7 3L10 18l-6 5-3-2V9l3-2 6 5zM22 9l-7 6 7 6zM4 11v8l4-4z" fill="#778388" fillRule="evenodd" /><path d="M1 9l3-2v16l-3-2z" fill="#873630" /></> },
  { name: "代码工具", size: "w-[51px]", icon: <><rect x="1" y="2" width="28" height="27" rx="3" stroke="#778388" strokeDasharray="1 2" /><path d="M12 10l-7 5 7 6M18 10l7 5-7 6" stroke="#873630" strokeWidth="3" /></> },
  { name: "录屏工具", size: "ml-[5px] w-[51px]", icon: <><circle cx="14" cy="14" r="13" fill="#873630" /><circle cx="22" cy="22" r="7" fill="#ba464a" /><path d="M8 6c1 4 5 5 11 2M18 8c-1 5 2 6 7 5M8 10c1 4 5 6 4 13" stroke="#ededeb" strokeWidth="1.8" /></> },
];

function TaskBar() {
  return (
    <div className="relative flex h-12 shrink-0">
      <div className={`flex w-[144px] items-center pl-[20px] ${SPARSE_DITHER}`}>
        <button aria-label="开始菜单"><Ico w={22} h={22}><path d="M0 3l9-1v8H0zM10 2l11-2v10H10zM0 11h9v9l-9-1zM10 11h11v11l-11-2z" fill="#873630" stroke="none" /></Ico></button>
        <button aria-label="搜索任务" className="ml-[38px]"><Ico w={20} h={22}><circle cx="13" cy="8" r="6" strokeWidth="1.6" /><path d="M9 13l-8 8" strokeWidth="2" /></Ico></button>
        <Ico w={6} h={26} className="ml-[24px]"><path d="M1 0v26M5 0v26" /></Ico>
      </div>
      <div className="flex gap-[6px]">
        {apps.map((a, i) => (
          <button key={a.name} aria-label={a.name} className={`flex h-full items-center justify-center border-b-[3px] border-[#778388] ${a.size} ${i === 1 || i === 2 ? SPARSE_DITHER : ""}`}>
            <svg width="30" height="30" viewBox="0 0 32 30" fill="none" aria-hidden="true">{a.icon}</svg>
          </button>
        ))}
      </div>
      <div className={`ml-auto flex w-[840px] items-center [mask-image:linear-gradient(to_right,transparent,black_300px)] pb-px pl-[390px] text-[18px] whitespace-nowrap ${SPARSE_DITHER}`}>
        <Ico w={28} h={28}><path d="M20 2c10 8 8 24-6 25-6 0-10-3-12-8 9 3 20-3 18-17z" fill="#ee5560" stroke="none" /><path d="M1 10h14M9 3l7 6" stroke="#a5adb0" strokeDasharray="3 1" /></Ico>
        <span className="ml-[11px]">12°C</span>
        <span className="ml-[11px]">大部晴朗</span>
        <button aria-label="显示隐藏的图标" className="ml-[30px]"><Ico w={18} h={12}><path d="M1 11l8-8 8 8" strokeWidth="1.6" /></Ico></button>
        <button aria-label="音量" className="ml-[10px]"><Ico w={22} h={18}><path d="M1 6h4l5-5v16l-5-5H1zM13 6c2 2 2 4 0 6M16 4c3 3 3 7 0 10M18 1c5 5 5 11 0 16" /></Ico></button>
        <span className="ml-[11px] text-[16px]">ENG</span>
        <span className="ml-[16px] text-right text-[16px] leading-[23px]">
          <span className="block pr-[22px]">21:00</span>
          <span className="block">2023/3/20</span>
        </span>
      </div>
      <Ico w={14} h={20} className="absolute bottom-0 left-[167px] h-[13px]">
        <path d="M1 1v18l4-3 3 6 3-1-3-6h5z" fill="#ededeb" stroke="#873630" />
      </Ico>
    </div>
  );
}

function QrCode() {
  const n = 35;
  const inBox = (x: number, y: number, bx: number, by: number, s: number) => x >= bx && x < bx + s && y >= by && y < by + s;
  let seed = 7;
  let d = "";
  for (let y = 0; y < n; y++)
    for (let x = 0; x < n; x++) {
      seed = (seed * 1103515245 + 12345) % 2147483648;
      const skip = inBox(x, y, 0, 0, 8) || inBox(x, y, n - 8, 0, 8) || inBox(x, y, 0, n - 8, 8) || inBox(x, y, 25, 25, 7) || inBox(x, y, 13, 13, 9);
      if (!skip && seed / 2147483648 > 0.46) d += `M${x} ${y}h1v1h-1z`;
    }
  return (
    <div className="absolute right-0 bottom-0 bg-[#ededeb] pt-[1px] pr-[6px] pb-[6px] pl-[6px]">
      <svg width="70" height="70" viewBox="0 0 35 35" fill="#873630" shapeRendering="crispEdges" role="img" aria-label="二维码">
        <path d={d} />
        {[[0, 0], [28, 0], [0, 28]].map(([x, y]) => (
          <path key={`${x}-${y}`} fillRule="evenodd" d={`M${x} ${y}h7v7h-7zM${x + 1} ${y + 1}v5h5v-5zM${x + 2} ${y + 2}h3v3h-3z`} />
        ))}
        <path fillRule="evenodd" d="M26 26h5v5h-5zM27 27v3h3v-3zM28 28h1v1h-1z" />
        <path d="M15 15h1v1h-1zM18 17h1v1h-1zM16 19h1v1h-1zM17 20h2v1h-2zM20 19h1v1h-1z" fill="#778388" />
      </svg>
    </div>
  );
}

export default function App() {
  return (
    <div className="relative flex h-screen flex-col overflow-hidden bg-[#ededeb] font-['Noto_Sans','Noto_Sans_CJK_SC',sans-serif] text-[#873630]">
      <TitleBar />
      <Tabs />
      <Ribbon />
      <Main />
      <StatusBar />
      <TaskBar />
      <QrCode />
    </div>
  );
}
